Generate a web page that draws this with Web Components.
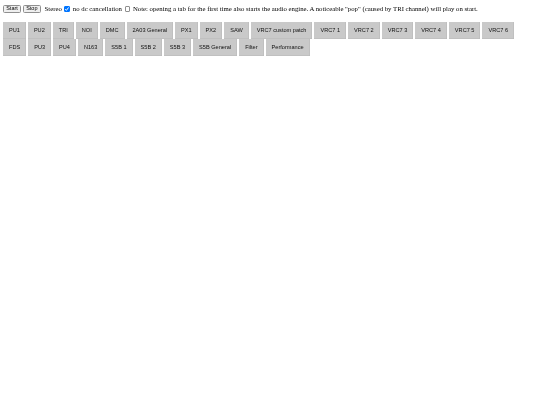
<!DOCTYPE html>
<html><head><meta charset="utf-8">
<style>
html,body{margin:0;background:#fff}
body{font:6.75px/8px "Liberation Serif",serif;color:#000}
</style></head><body>
<app-page>
<control-bar></control-bar>
<tab-strip>
<tab-button>PU1</tab-button><tab-button>PU2</tab-button><tab-button>TRI</tab-button><tab-button>NOI</tab-button><tab-button>DMC</tab-button><tab-button>2A03 General</tab-button><tab-button>PX1</tab-button><tab-button>PX2</tab-button><tab-button>SAW</tab-button><tab-button>VRC7 custom patch</tab-button><tab-button>VRC7 1</tab-button><tab-button>VRC7 2</tab-button><tab-button>VRC7 3</tab-button><tab-button>VRC7 4</tab-button><tab-button>VRC7 5</tab-button><tab-button>VRC7 6</tab-button><tab-button>FDS</tab-button><tab-button>PU3</tab-button><tab-button>PU4</tab-button><tab-button>N163</tab-button><tab-button>S5B 1</tab-button><tab-button>S5B 2</tab-button><tab-button>S5B 3</tab-button><tab-button>S5B General</tab-button><tab-button>Filter</tab-button><tab-button>Performance</tab-button>
</tab-strip>
</app-page>
<script>
class AppPage extends HTMLElement{constructor(){super();this.attachShadow({mode:'open'}).innerHTML=`<style>
:host{display:block;box-sizing:border-box;width:530px;padding:4.5px 3px;filter:blur(.27px)}
</style><slot></slot>`}}
customElements.define('app-page',AppPage);
class ControlBar extends HTMLElement{constructor(){super();this.attachShadow({mode:'open'}).innerHTML=`<style>
:host{display:flex;align-items:center;height:9px;white-space:pre}
button{font:5.5px "Liberation Sans",sans-serif;color:#000;background:#efefef;border:.5px solid #8f8f8f;border-radius:1.5px;padding:0;width:18px;height:8.5px;margin:0 1.8px 0 0;line-height:1}
button.l{margin-right:3.8px}
input{appearance:none;display:block;width:5.8px;height:5.8px;margin:0;border:.5px solid #8f8f8f;border-radius:1px;background:#fff;box-sizing:border-box}
input:checked{background:#0075ff;border-color:#0075ff}
.c{position:relative;display:block;width:5.8px;height:5.8px;margin:0 2.6px}
.c svg{position:absolute;inset:0;width:5.8px;height:5.8px}
</style><button>Start</button><button class="l">Stop</button><span>Stereo</span><span class="c"><input type="checkbox" checked><svg viewBox="0 0 12 12"><path d="M2.5 6.5 5 9l4.5-6" fill="none" stroke="#fff" stroke-width="2"/></svg></span><span>no dc cancellation</span><span class="c"><input type="checkbox"></span><span>Note: opening a tab for the first time also starts the audio engine. A noticeable "pop" (caused by TRI channel) will play on start.</span>`}}
customElements.define('control-bar',ControlBar);
class TabStrip extends HTMLElement{constructor(){super();this.attachShadow({mode:'open'}).innerHTML=`<style>
:host{display:flex;flex-wrap:wrap;gap:.5px 2px;margin-top:8.5px;width:520px}
</style><slot></slot>`}}
customElements.define('tab-strip',TabStrip);
class TabButton extends HTMLElement{constructor(){super();this.attachShadow({mode:'open'}).innerHTML=`<style>
:host{display:block;box-sizing:border-box;height:16.5px;padding:0 6px;background:#c9c9c9;color:#111;font:5.6px/16.5px "Liberation Sans",sans-serif;white-space:nowrap;box-shadow:inset -.5px -.5px 0 #b8b8b8}
</style><slot></slot>`}}
customElements.define('tab-button',TabButton);
</script>
</body></html>
